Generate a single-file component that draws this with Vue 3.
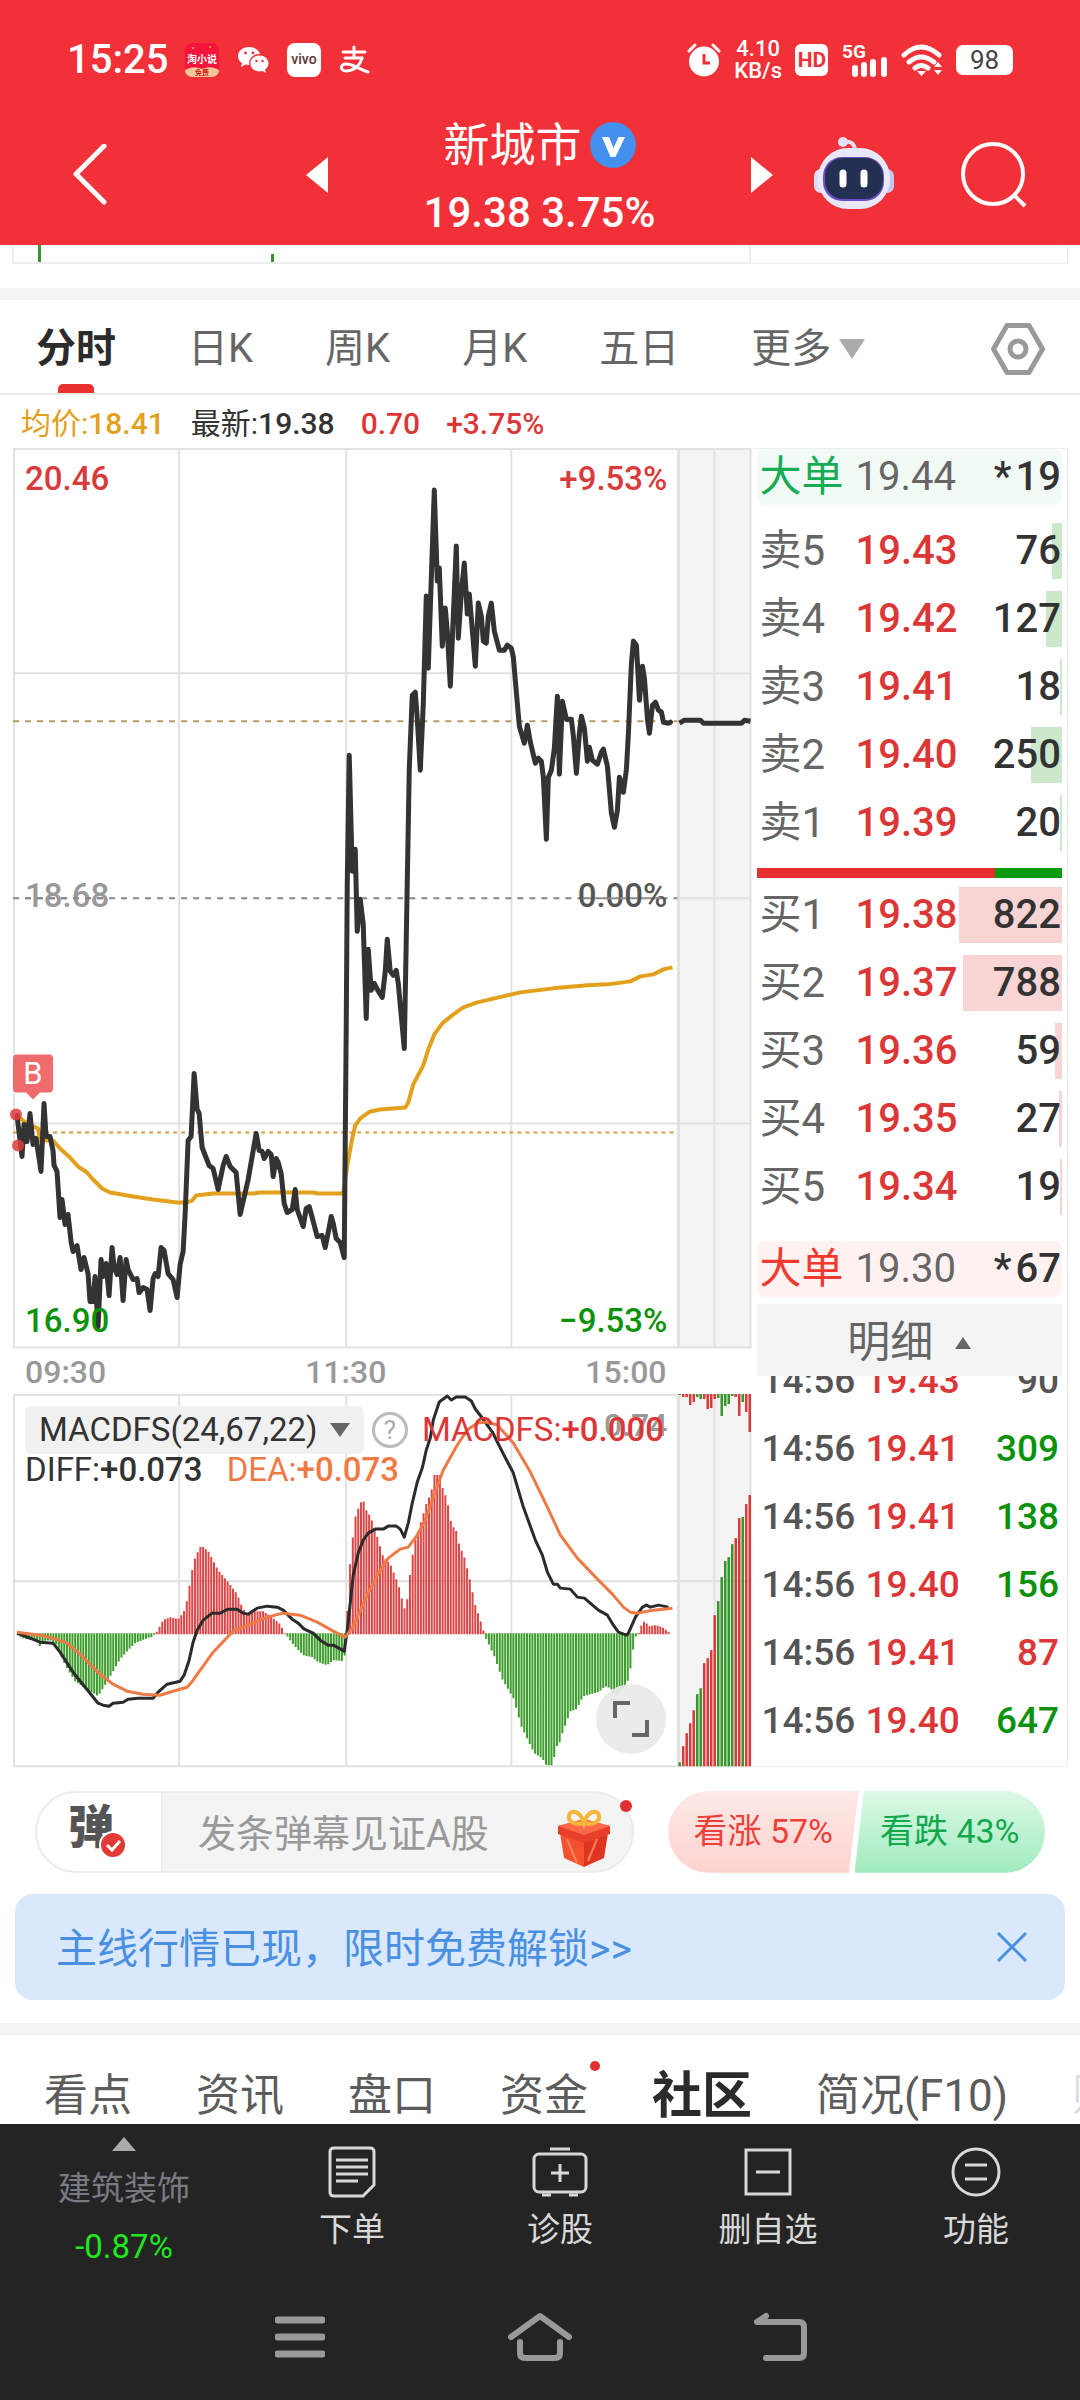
<script setup>
import { computed, ref } from "vue";

const periods = ["分时", "日K", "周K", "月K", "五日"];
const activePeriod = ref("分时");

const indicator = ref("MACDFS(24,67,22)");
const message = ref("");
const showBanner = ref(true);

const sells = [
  { name: "卖5", price: "19.43", vol: 76 },
  { name: "卖4", price: "19.42", vol: 127 },
  { name: "卖3", price: "19.41", vol: 18 },
  { name: "卖2", price: "19.40", vol: 250 },
  { name: "卖1", price: "19.39", vol: 20 },
];

const buys = [
  { name: "买1", price: "19.38", vol: 822 },
  { name: "买2", price: "19.37", vol: 788 },
  { name: "买3", price: "19.36", vol: 59 },
  { name: "买4", price: "19.35", vol: 27 },
  { name: "买5", price: "19.34", vol: 19 },
];

const ticks = [
  { time: "14:56", price: "19.43", vol: 90, type: "flat" },
  { time: "14:56", price: "19.41", vol: 309, type: "down" },
  { time: "14:56", price: "19.41", vol: 138, type: "down" },
  { time: "14:56", price: "19.40", vol: 156, type: "down" },
  { time: "14:56", price: "19.41", vol: 87, type: "up" },
  { time: "14:56", price: "19.40", vol: 647, type: "down" },
];

// 挂单量柱宽
const barWidth = (vol) => Math.max(vol * 0.0411, 0.6) + "%";

const tabs = [
  { name: "看点" },
  { name: "资讯" },
  { name: "盘口" },
  { name: "资金", dot: true },
  { name: "社区", active: true },
  { name: "简况(F10)" },
  { name: "财务", faded: true },
];

// 分时价格线
const priceLine =
  "4,667 9,708 11,676 14,693 17,665 20,696 23,690 28,723 31,655 33,688 37,688 40,702 41,717 44,723 47,769 49,751 52,776 55,766 58,793 60,803 64,797 68,821 71,809 75,825 77,853 80,853 82,828 85,878 88,811 90,828 93,815 96,847 99,799 101,819 104,826 107,809 110,852 113,811 115,821 120,831 124,830 126,844 130,839 134,841 137,862 140,830 142,825 145,828 148,799 151,802 155,825 160,831 164,849 167,816 170,803 172,766 175,692 178,688 181,625 184,661 186,665 189,699 196,717 200,720 205,741 210,717 213,708 217,718 223,724 227,766 235,731 243,685 246,702 249,703 251,710 255,703 258,706 260,728 263,710 265,714 268,725 271,755 274,764 279,761 282,741 284,761 290,778 293,760 296,758 299,769 304,788 309,787 312,799 315,784 318,768 320,775 323,790 327,794 331,809 333,579 334,438 336,307 339,423 342,401 344,483 347,451 350,476 353,570 355,501 358,542 361,535 364,541 369,549 372,523 374,491 377,523 380,527 383,522 385,535 391,600 393,491 396,321 399,247 402,244 404,271 407,322 410,256 413,148 415,220 421,42 424,133 426,120 429,198 432,160 434,183 437,238 440,168 443,98 445,190 448,145 451,115 454,166 456,146 462,218 465,155 468,168 470,193 473,195 475,168 478,155 481,183 486,202 491,202 494,197 498,200 500,209 503,244 506,278 511,295 514,277 517,294 522,315 525,310 528,313 530,329 533,391 535,329 538,322 541,300 544,248 546,326 549,253 553,271 558,271 560,288 563,325 566,285 568,268 571,280 574,313 576,299 579,312 584,316 588,304 590,301 594,318 598,365 601,379 604,362 606,329 610,344 613,321 615,285 618,215 620,193 623,197 626,252 629,218 631,230 634,271 636,285 639,257 642,254 645,262 648,264 650,274 655,275 657,274";

const afterLine =
  "666,275 671,272 687,272 690,275 728,275 731,272 737,273";

// 均价线
const avgLine =
  "4,667 15,676 25,680 27,692 40,692 47,700 57,709 65,718 74,724 79,730 89,740 97,744 120,748 140,751 164,754 174,754 179,752 183,747 200,745 240,745 247,744 300,744 305,745 330,745 334,717 339,690 342,677 347,670 357,663 367,661 392,659 395,654 400,636 410,617 415,601 421,586 429,575 440,566 450,559 464,554 494,547 507,544 540,540 574,537 594,536 617,533 627,528 640,526 650,521 659,519";

const diffLine =
  "4,239 12,242 27,248 40,249 47,258 60,278 77,299 85,309 90,311 96,312 100,309 110,308 115,305 125,304 140,304 145,298 154,290 167,287 171,281 176,266 180,248 184,236 190,226 199,219 207,219 215,215 224,215 230,219 235,220 244,214 254,212 264,213 270,216 279,225 285,229 291,235 300,239 307,246 315,251 320,251 331,257 334,236 337,209 340,181 345,159 350,146 355,139 362,135 370,135 375,132 383,132 387,135 391,143 395,129 399,109 404,88 409,74 413,56 417,44 420,26 426,8 434,2 438,6 443,3 452,3 458,7 462,15 469,24 479,38 487,54 500,79 510,113 522,146 529,161 534,178 540,190 544,190 547,194 557,195 564,203 571,204 585,216 594,221 600,231 605,238 613,241 615,239 622,223 629,213 633,211 637,213 645,211 655,213";

const deaLine =
  "4,238 27,241 40,244 54,249 67,260 87,280 100,290 114,297 130,300 147,301 160,297 174,293 180,286 200,258 220,237 234,231 254,223 270,219 287,221 304,228 320,237 332,243 339,234 345,221 354,201 364,181 375,164 387,155 395,153 404,141 412,126 420,103 430,76 444,51 454,36 464,29 474,28 484,31 500,49 517,78 534,113 547,141 564,164 584,185 599,200 610,213 617,218 624,219 640,216 659,214";

// MACD 柱的关键点 [x, 高度]
const macdShape = [
  [5, -2], [9, -5], [19, -7], [24, -8], [28, -15], [30, -8], [37, -7], [44, -12],
  [47, -21], [54, -35], [62, -48], [72, -55], [85, -63], [90, -55], [99, -40],
  [107, -26], [114, -18], [122, -10], [134, -5], [139, -4], [143, 1], [150, 14],
  [157, 17], [165, 15], [170, 21], [173, 28], [175, 43], [178, 55], [180, 72],
  [184, 80], [186, 87], [190, 87], [195, 83], [205, 64], [215, 52], [224, 40],
  [229, 27], [234, 19], [240, 23], [250, 23], [260, 16], [267, 10], [272, 0],
  [279, -10], [290, -22], [299, -24], [305, -29], [314, -32], [320, -27],
  [331, -28], [333, 0], [336, 62], [339, 90], [341, 114], [347, 131], [350, 134],
  [353, 124], [357, 118], [362, 104], [370, 77], [377, 70], [385, 50], [388, 38],
  [391, 25], [394, 35], [396, 54], [399, 77], [402, 94], [407, 110], [413, 130],
  [418, 142], [421, 159], [427, 159], [429, 147], [432, 139], [435, 128],
  [438, 110], [443, 103], [446, 89], [451, 77], [456, 57], [462, 29], [467, 14],
  [470, 4], [473, -6], [481, -23], [489, -46], [500, -65], [508, -93],
  [516, -110], [521, -120], [529, -125], [533, -132], [539, -132], [541, -123],
  [544, -111], [546, -110], [549, -100], [557, -78], [563, -76], [570, -63],
  [585, -59], [592, -53], [597, -55], [602, -62], [605, -61], [612, -53],
  [615, -46], [618, -30], [620, -14], [623, -1], [626, 2], [628, 9], [631, 13],
  [636, 8], [642, 9], [649, 7], [657, 1],
];

const macdBars = computed(() => {
  const bars = [];
  let k = 0;
  for (let i = 0; i < 240; i++) {
    const x = 5 + i * 2.72;
    while (k < macdShape.length - 2 && macdShape[k + 1][0] < x) k++;
    const [x1, h1] = macdShape[k];
    const [x2, h2] = macdShape[k + 1];
    const t = Math.min((x - x1) / (x2 - x1), 1);
    bars.push({ x, h: h1 + (h2 - h1) * t });
  }
  return bars;
});

const upBars = computed(() =>
  macdBars.value.filter((b) => b.h > 0).map((b) => `M${b.x} 240v${-b.h}`).join("")
);
const downBars = computed(() =>
  macdBars.value.filter((b) => b.h <= 0).map((b) => `M${b.x} 239v${-b.h}`).join("")
);

// 盘后量
const afterHeights = [4, 20, 33, 43, 56, 72, 78, 103, 108, 116, 151, 165, 189, 205, 209, 222, 228, 248, 249, 262, 271];
const afterTops = [1, 3, 3, 11, 8, 3, 5, 5, 15, 14, 5, 4, 22, 12, 10, 2, 3, 22, 8, 18, 38];
const afterColors = "grrrrggrrrrgggggrrgrr";
const colorAt = (i) => (afterColors[i] === "g" ? "#35962a" : "#d93a3a");
</script>

<template>
  <div class="page">
    <header class="top">
      <div class="status">
        <div class="status-side">
          <span class="clock">15:25</span>
          <svg class="s34" viewBox="0 0 34 34">
            <rect width="34" height="34" rx="7" fill="#f5153c" />
            <path d="M0 27q8-5 17-1 9-4 17 1a7 7 0 0 1-7 7H7a7 7 0 0 1-7-7z" fill="#f5c795" />
            <circle cx="8" cy="5" r="1" fill="#ffb14a" />
            <circle cx="25" cy="4" r="1" fill="#ffb14a" />
            <text x="17" y="20" text-anchor="middle" font-size="10" font-weight="700" fill="#fff">淘小说</text>
            <text x="17" y="32" text-anchor="middle" font-size="7" font-weight="700" fill="#c22">免费</text>
          </svg>
          <svg class="s34" viewBox="0 0 34 34">
            <path d="M13 4C6.500 4 2 8 2 13c0 3 1.500 5.500 4 7l-1 4 4.500-2.500 4 .6C12 16 17 10.500 24 11 23 7 18.500 4 13 4z" fill="#fff" />
            <circle cx="9.500" cy="10" r="1.400" fill="#f13037" />
            <circle cx="17" cy="10" r="1.400" fill="#f13037" />
            <path d="M23.500 12.500c-5 0-9 3.500-9 8s4 8 9 8c1 0 2-.2 3-.5l3.500 2-1-3.200c2-1.500 3.500-3.700 3.500-6.300 0-4.500-4-8-9-8z" fill="#fff" />
            <circle cx="20.500" cy="18" r="1.200" fill="#f13037" />
            <circle cx="26.500" cy="18" r="1.200" fill="#f13037" />
          </svg>
          <svg class="s34" viewBox="0 0 34 34">
            <rect width="34" height="34" rx="8" fill="#fff" />
            <text x="17" y="21" text-anchor="middle" font-size="14" font-weight="500" fill="#5c3535">vivo</text>
          </svg>
          <svg class="s34" viewBox="0 0 34 34" fill="none" stroke="#fff" stroke-width="3" stroke-linecap="round">
            <path d="M5 9h22M16 4v11M7 15h17" />
            <path d="M24 15c-2 8-9 13-16 13-6 0-6-7 0-7 7 0 13 5 22 8" />
          </svg>
        </div>
        <div class="status-side right">
          <svg class="s34" viewBox="0 0 34 34">
            <circle cx="17" cy="18.500" r="15" fill="#fff" />
            <path d="M2 8l6-6M32 8l-6-6" stroke="#fff" stroke-width="3" stroke-linecap="round" />
            <path d="M17 11v9h6" fill="none" stroke="#f13037" stroke-width="3" />
          </svg>
          <span class="speed"><span>4.10</span><span>KB/s</span></span>
          <svg class="s34" viewBox="0 0 34 34">
            <rect y="1" width="33" height="32" rx="6" fill="#fff" />
            <text x="17" y="24" text-anchor="middle" font-size="21" font-weight="700" fill="#f13037">HD</text>
          </svg>
          <svg class="signal" viewBox="0 0 46 38">
            <text x="0" y="17" font-size="19" font-weight="700" fill="#fff">5G</text>
            <path d="M13 33v-6M22 33v-9M31 33v-12M42 33V19" stroke="#fff" stroke-width="6" stroke-linecap="round" />
          </svg>
          <svg class="wifi" viewBox="0 0 42 34">
            <path d="M3 12Q20-4 38 12M8 19q12-10 25 0M14 25q6-5 13 0" fill="none" stroke="#fff" stroke-width="5" stroke-linecap="round" />
            <path d="M16 28h9l-4.500 5zM33 24l4-5 4 5zM33 27h8l-4 5z" fill="#fff" />
          </svg>
          <span class="battery">98</span>
        </div>
      </div>

      <div class="titlebar">
        <button class="back" aria-label="返回">
          <svg width="36" height="62" viewBox="0 0 36 62">
            <path d="M32 2L4 30l28 28" fill="none" stroke="#fff" stroke-width="5" stroke-linecap="round" stroke-linejoin="round" />
          </svg>
        </button>
        <div class="switcher">
          <button aria-label="上一只">
            <svg width="22" height="36" viewBox="0 0 22 36"><path d="M22 0v36L0 18z" fill="#fff" /></svg>
          </button>
          <h1 class="stock">
            <span class="name">
              新城市
              <svg width="46" height="46" viewBox="0 0 46 46">
                <circle cx="23" cy="23" r="23" fill="#4490ee" />
                <path d="M12 15h7l4.500 11 5-11H35L25.500 35h-5z" fill="#fff" />
              </svg>
            </span>
            <span class="quote">19.38 3.75%</span>
          </h1>
          <button aria-label="下一只">
            <svg width="22" height="36" viewBox="0 0 22 36"><path d="M0 0v36l22-18z" fill="#fff" /></svg>
          </button>
        </div>
        <button class="robot" aria-label="智能助手">
          <svg width="80" height="76" viewBox="0 0 80 76">
            <path d="M30 5q10-2 11 8" fill="none" stroke="#e6e0f6" stroke-width="4" />
            <circle cx="29" cy="5" r="5" fill="#e6e0f6" />
            <rect y="32" width="14" height="24" rx="7" fill="#dcdff5" />
            <rect x="66" y="32" width="14" height="24" rx="7" fill="#c3c8ee" />
            <rect x="4" y="11" width="72" height="61" rx="30" fill="#e9e8fa" />
            <rect x="9" y="20" width="61" height="44" rx="19" fill="#6a4fc4" />
            <rect x="11" y="21" width="58" height="41" rx="18" fill="#243052" />
            <path d="M29 36v11M50 36v11" stroke="#fff" stroke-width="7" stroke-linecap="round" />
          </svg>
        </button>
        <button aria-label="搜索">
          <svg width="68" height="68" viewBox="0 0 68 68">
            <circle cx="33" cy="33" r="30" fill="none" stroke="#fff" stroke-width="4" />
            <path d="M54 54l11 11" stroke="#fff" stroke-width="4" />
          </svg>
        </button>
      </div>
    </header>

    <div class="strip">
      <div class="strip-left"><i class="tall"></i><i class="short"></i></div>
      <div class="strip-right"></div>
    </div>
    <div class="band"></div>

    <nav class="periods">
      <button
        v-for="p in periods"
        :key="p"
        :class="{ active: p === activePeriod }"
        @click="activePeriod = p"
      >
        {{ p }}
      </button>
      <button class="more">
        更多
        <svg width="26" height="20" viewBox="0 0 26 20"><path d="M0 0h26L13 20z" fill="#aaa" /></svg>
      </button>
      <button class="setting" aria-label="设置">
        <svg width="54" height="52" viewBox="0 0 54 52">
          <path d="M16 2.500h22L51.500 26 38 49.500H16L2.500 26z" fill="none" stroke="#999" stroke-width="5" stroke-linejoin="round" />
          <circle cx="27" cy="26" r="8" fill="none" stroke="#999" stroke-width="5" />
        </svg>
      </button>
    </nav>

    <div class="info">
      <span class="gold">均价:<b>18.41</b></span>
      <span>最新:<b>19.38</b></span>
      <b class="up">0.70</b>
      <b class="up">+3.75%</b>
    </div>

    <main class="board">
      <section class="charts">
        <svg class="chart" viewBox="0 0 738 900">
          <rect x="664" y="1" width="74" height="898" fill="#f4f4f4" />
          <g fill="none" stroke="#e2e2e2" stroke-width="2">
            <path d="M1 1h736v898H1zM166 1v898M333 1v898M498 1v898M701 1v898M1 225h736M664 450h73M1 675h736" />
            <path d="M665 1v898" stroke-width="3" />
          </g>
          <path d="M0 273h664" stroke="#b89a62" stroke-width="2" stroke-dasharray="6 6" />
          <path d="M0 450h664" stroke="#888" stroke-width="2" stroke-dasharray="6 6" />
          <path d="M0 684h664" stroke="#d99a3c" stroke-width="2" stroke-dasharray="4 4" />
          <polyline :points="avgLine" fill="none" stroke="#e2a01c" stroke-width="4" stroke-linejoin="round" />
          <polyline :points="priceLine" fill="none" stroke="#333" stroke-width="5" stroke-linejoin="round" stroke-linecap="round" />
          <polyline :points="afterLine" fill="none" stroke="#333" stroke-width="5" stroke-linejoin="round" />
          <g font-size="33" font-weight="500">
            <text x="12" y="42" fill="#d93a3a">20.46</text>
            <text x="12" y="459" fill="#999">18.68</text>
            <text x="12" y="883" fill="#0b920b">16.90</text>
            <g text-anchor="end">
              <text x="654" y="42" fill="#d93a3a">+9.53%</text>
              <text x="654" y="459" fill="#555">0.00%</text>
              <text x="654" y="883" fill="#0b920b">−9.53%</text>
            </g>
          </g>
          <path d="M12 450h78M570 450h84" stroke="#888" stroke-width="2" stroke-dasharray="6 6" />
          <path d="M4 606h32a4 4 0 0 1 4 4v30a4 4 0 0 1-4 4h-9l-7 7-7-7H4a4 4 0 0 1-4-4v-30a4 4 0 0 1 4-4z" fill="#f06c6c" />
          <text x="20" y="636" text-anchor="middle" font-size="31" fill="#fff">B</text>
          <g fill="#e03c3c" fill-opacity=".85">
            <circle cx="3" cy="666" r="6" />
            <circle cx="5" cy="697" r="6" />
          </g>
        </svg>

        <div class="axis">
          <span>09:30</span>
          <span>11:30</span>
          <span>15:00</span>
        </div>

        <div class="macd">
          <svg class="chart" viewBox="0 0 738 373">
            <rect x="664" y="1" width="74" height="371" fill="#f4f4f4" />
            <g fill="none" stroke="#e2e2e2" stroke-width="2">
              <path d="M1 1h736v371H1zM166 1v371M333 1v371M498 1v371M701 1v371M1 187h736" />
              <path d="M665 1v371" stroke-width="3" />
            </g>
            <path :d="upBars" stroke="#dc4646" stroke-width="2" />
            <path :d="downBars" stroke="#3d9c2c" stroke-width="2" />
            <g v-for="(h, i) in afterHeights" :key="i" :fill="colorAt(i)">
              <rect :x="665 + i * 3.5" :y="372 - h" width="2.500" :height="h" />
              <rect :x="665 + i * 3.5" y="0" width="2.500" :height="afterTops[i]" />
            </g>
            <text x="654" y="42" text-anchor="end" font-size="32" font-weight="500" fill="#999">0.74</text>
            <polyline :points="diffLine" fill="none" stroke="#2b2b2b" stroke-width="3" stroke-linejoin="round" />
            <polyline :points="deaLine" fill="none" stroke="#ef7a45" stroke-width="3" stroke-linejoin="round" />
          </svg>
          <div class="legend">
            <div class="legend-row">
              <label class="picker">
                <select v-model="indicator" aria-label="指标">
                  <option>MACDFS(24,67,22)</option>
                </select>
                <svg width="20" height="14" viewBox="0 0 20 14"><path d="M0 0h20L10 14z" fill="#666" /></svg>
              </label>
              <button class="help" aria-label="说明">?</button>
              <span class="up">MACDFS:<b>+0.000</b></span>
            </div>
            <div class="legend-row second">
              <span>DIFF:<b>+0.073</b></span>
              <span class="orange">DEA:<b>+0.073</b></span>
            </div>
          </div>
          <button class="expand" aria-label="全屏">
            <svg width="36" height="36" viewBox="0 0 36 36">
              <path d="M2 17V2h15M34 19v15H19" fill="none" stroke="#666" stroke-width="4" />
            </svg>
          </button>
        </div>
      </section>

      <section class="orders">
        <div class="big sell"><span>大单</span><b>19.44</b><strong><i>*</i>19</strong></div>
        <table class="book sells">
          <tbody>
            <tr v-for="r in sells" :key="r.name">
              <th scope="row">{{ r.name }}</th>
              <td class="up">{{ r.price }}</td>
              <td class="vol"><i :style="{ width: barWidth(r.vol) }"></i><span>{{ r.vol }}</span></td>
            </tr>
          </tbody>
        </table>
        <div class="ratio"></div>
        <table class="book buys">
          <tbody>
            <tr v-for="r in buys" :key="r.name">
              <th scope="row">{{ r.name }}</th>
              <td class="up">{{ r.price }}</td>
              <td class="vol"><i :style="{ width: barWidth(r.vol) }"></i><span>{{ r.vol }}</span></td>
            </tr>
          </tbody>
        </table>
        <div class="big buy"><span>大单</span><b>19.30</b><strong><i>*</i>67</strong></div>
        <button class="detail">
          明细
          <svg width="16" height="12" viewBox="0 0 16 12"><path d="M0 12L8 0l8 12z" fill="#666" /></svg>
        </button>
        <div class="tick-box">
          <table class="ticks">
            <tbody>
              <tr v-for="(t, i) in ticks" :key="i">
                <td>{{ t.time }}</td>
                <td class="up">{{ t.price }}</td>
                <td :class="t.type">{{ t.vol }}</td>
              </tr>
            </tbody>
          </table>
        </div>
      </section>
    </main>

    <div class="social">
      <div class="danmu">
        <button class="danmu-switch" aria-label="弹幕开关">
          <span>弹</span>
          <svg width="28" height="28" viewBox="0 0 28 28">
            <circle cx="14" cy="14" r="13" fill="#e23a35" stroke="#fff" stroke-width="2" />
            <path d="M8 14l5 5 8-9" fill="none" stroke="#fff" stroke-width="3" />
          </svg>
        </button>
        <input v-model="message" type="text" placeholder="发条弹幕见证A股" aria-label="弹幕" />
        <button class="gift" aria-label="礼物">
          <svg width="54" height="58" viewBox="0 0 54 58">
            <path d="M3 24l24 9v25L7 49z" fill="#f4512f" />
            <path d="M51 24l-24 9v25l20-9z" fill="#de3522" />
            <path d="M1 17l26-7 26 7v8L27 34 1 25z" fill="#e8402a" />
            <path d="M1 17l26-7 26 7-26 9z" fill="#ff6a4a" />
            <path d="M10 30l10 24M40 30L31 52" stroke="#ff8158" stroke-width="2" />
            <path d="M27 14C20 16 11 14 12 7s11-6 15 7c4-13 14-14 15-7s-8 9-15 7z" fill="none" stroke="#f5b63c" stroke-width="4" />
          </svg>
        </button>
        <i class="dot"></i>
      </div>
      <div class="vote">
        <button class="bull">看涨 57%</button>
        <button class="bear">看跌 43%</button>
      </div>
    </div>

    <div v-if="showBanner" class="banner">
      <a href="#">主线行情已现，限时免费解锁&gt;&gt;</a>
      <button aria-label="关闭" @click="showBanner = false">
        <svg width="32" height="32" viewBox="0 0 32 32">
          <path d="M2 2l28 28M30 2L2 30" stroke="#4a90e2" stroke-width="3" />
        </svg>
      </button>
    </div>

    <div class="band"></div>
    <nav class="tabs">
      <button v-for="t in tabs" :key="t.name" :class="{ active: t.active, faded: t.faded }">
        {{ t.name }}<i v-if="t.dot" class="dot"></i>
      </button>
    </nav>

    <footer class="bottom">
      <div class="actions">
        <button class="sector">
          <svg width="24" height="14" viewBox="0 0 24 14"><path d="M0 14L12 0l12 14z" fill="#aaa" /></svg>
          <span>建筑装饰</span>
          <em>-0.87%</em>
        </button>
        <button>
          <svg width="48" height="52" viewBox="0 0 48 52">
            <path d="M6 2h36q4 0 4 4v33L35 50H6q-4 0-4-4V6q0-4 4-4z" />
            <path d="M8 14h32M8 21h32M8 28h32M8 35h22" />
          </svg>
          下单
        </button>
        <button>
          <svg width="56" height="52" viewBox="0 0 56 52">
            <rect x="2" y="8" width="52" height="38" rx="5" />
            <path d="M18 3h20M10 49h9M37 49h9M28 18v18M19 27h18" />
          </svg>
          诊股
        </button>
        <button>
          <svg width="48" height="52" viewBox="0 0 48 52">
            <rect x="2" y="4" width="44" height="44" />
            <path d="M12 26h24" />
          </svg>
          删自选
        </button>
        <button>
          <svg width="50" height="52" viewBox="0 0 50 52">
            <circle cx="25" cy="26" r="23" />
            <path d="M14 19h22M14 33h22" />
          </svg>
          功能
        </button>
      </div>
      <div class="sysnav">
        <button aria-label="菜单">
          <svg width="50" height="42" viewBox="0 0 50 42">
            <path d="M3 4h44M3 21h44M3 38h44" stroke-width="7" />
          </svg>
        </button>
        <button aria-label="主页">
          <svg width="64" height="50" viewBox="0 0 64 50">
            <path d="M3 25L32 4l29 21M12 30v11q0 5 5 5h30q5 0 5-5V30" stroke-width="6" />
          </svg>
        </button>
        <button aria-label="后退">
          <svg width="54" height="50" viewBox="0 0 54 50">
            <path d="M13 4L4 10h42q5 0 5 5v26q0 5-5 5H13" stroke-width="6" />
          </svg>
        </button>
      </div>
    </footer>
  </div>
</template>

<style>
body {
  background: #fff;
}
</style>

<style scoped>
.page {
  min-height: 100vh;
  display: flex;
  flex-direction: column;
  font-family: Roboto, "Noto Sans CJK SC", sans-serif;
  line-height: 1.2;
  color: #333;
  overflow: hidden;
}

.page * {
  box-sizing: border-box;
}

button {
  border: 0;
  padding: 0;
  background: none;
  font: inherit;
  color: inherit;
}

svg {
  display: block;
  flex: none;
}

b,
strong {
  font-weight: 500;
}

i,
em {
  font-style: normal;
}

.up {
  color: #dc3636;
}

.down {
  color: #0b920b;
}

.top {
  background: #f13037;
  color: #fff;
}

.status {
  height: 90px;
  padding: 30px 67px 0;
  display: flex;
  align-items: center;
  justify-content: space-between;
}

.status-side {
  display: flex;
  align-items: center;
  gap: 17px;
}

.right {
  gap: 13px;
}

.clock {
  font-size: 40px;
  font-weight: 500;
}

.s34 {
  width: 34px;
  height: 34px;
}

.speed {
  display: flex;
  flex-direction: column;
  align-items: center;
  font-size: 22px;
  line-height: 22px;
  font-weight: 500;
}

.signal {
  width: 46px;
  height: 38px;
}

.wifi {
  width: 42px;
  height: 34px;
}

.battery {
  width: 57px;
  height: 30px;
  border-radius: 7px;
  background: #fff;
  color: #444;
  font-size: 26px;
  line-height: 30px;
  text-align: center;
}

.titlebar {
  height: 155px;
  padding: 14px 52px 0 72px;
  display: flex;
  align-items: center;
}

.back {
  width: 234px;
}

.switcher {
  flex: 1;
  display: flex;
  align-items: center;
  justify-content: space-between;
}

.stock {
  margin: 0;
  padding-top: 8px;
  font-weight: 400;
  display: flex;
  flex-direction: column;
  align-items: center;
}

.name {
  display: flex;
  align-items: center;
  gap: 8px;
  font-size: 46px;
  line-height: 68px;
}

.quote {
  font-size: 42px;
  line-height: 68px;
  font-weight: 500;
}

.robot {
  margin: 0 66px 0 41px;
}

.strip {
  height: 43px;
  padding: 0 12px 24px;
  display: grid;
  grid-template-columns: 7fr 3fr;
}

.strip-left {
  border: 2px solid #eee;
  border-top: 0;
  display: flex;
  align-items: flex-end;
}

.strip-right {
  border: 1px solid #eee;
  border-width: 0 1px 1px 0;
}

.strip i {
  width: 3px;
  background: #35962a;
}

.tall {
  height: 100%;
  margin-left: 24px;
}

.short {
  height: 8px;
  margin-left: 230px;
}

.band {
  height: 12px;
  background: #f4f4f4;
}

.periods {
  height: 95px;
  padding: 0 35px 0 36px;
  border-bottom: 2px solid #eaeaea;
  display: flex;
  gap: 72px;
  font-size: 40px;
  color: #666;
}

.periods button {
  position: relative;
  padding-top: 5px;
}

.periods .active {
  color: #2b2b2b;
  font-weight: 700;
}

.periods .active::after {
  content: "";
  position: absolute;
  left: 22px;
  right: 22px;
  bottom: 0;
  height: 9px;
  border-radius: 5px 5px 0 0;
  background: #e93030;
}

.more {
  display: flex;
  align-items: center;
  gap: 8px;
}

.setting {
  margin-left: auto;
}

.info {
  height: 53px;
  padding: 4px 21px 0;
  display: flex;
  align-items: center;
  gap: 26px;
  font-size: 30px;
}

.gold {
  color: #e2a01c;
}

.board {
  padding: 0 12px 0 13px;
  display: grid;
  grid-template-columns: 7fr 3fr;
}

.chart {
  width: 100%;
  height: auto;
  overflow: visible;
}

.axis {
  height: 45px;
  padding: 3px 85px 0 12px;
  display: flex;
  align-items: center;
  justify-content: space-between;
  font-size: 32px;
  font-weight: 500;
  color: #999;
}

.macd {
  position: relative;
}

.legend {
  position: absolute;
  left: 12px;
  top: 12px;
  font-size: 33px;
}

.legend-row {
  display: flex;
  align-items: center;
  line-height: 48px;
}

.second {
  gap: 24px;
  line-height: 32px;
}

.picker {
  height: 48px;
  padding: 0 14px;
  border-radius: 6px;
  background: #f1f1f1;
  display: flex;
  align-items: center;
  gap: 12px;
}

.picker select {
  appearance: none;
  border: 0;
  padding: 0;
  background: none;
  font: inherit;
  color: inherit;
}

.help {
  width: 36px;
  height: 36px;
  margin: 0 14px 0 8px;
  border: 3px solid #bbb;
  border-radius: 50%;
  font-size: 26px;
  line-height: 30px;
  color: #aaa;
}

.orange {
  color: #ef7a45;
}

.expand {
  position: absolute;
  right: 86px;
  bottom: 13px;
  width: 70px;
  height: 70px;
  border-radius: 50%;
  background: rgba(233, 233, 233, 0.92);
  display: flex;
  align-items: center;
  justify-content: center;
}

.orders {
  padding: 0 5px;
  border: 1px solid #eee;
  border-left: 0;
  display: flex;
  flex-direction: column;
}

.big {
  height: 56px;
  padding: 0 1px 0 3px;
  border-radius: 8px;
  display: grid;
  grid-template-columns: 96px 1fr auto;
  align-items: center;
  font-size: 40px;
}

.big span {
  font-size: 42px;
}

.big b {
  color: #666;
  font-weight: 400;
}

.big i {
  margin-right: 4px;
}

.sell {
  background: #f1faf5;
}

.sell span {
  color: #15ac55;
}

.buy {
  background: #fff2f1;
}

.buy span {
  color: #f03a30;
}

.book {
  display: block;
}

.book tbody {
  display: grid;
  gap: 12px;
}

.book tr {
  position: relative;
  height: 56px;
  padding: 0 1px 0 3px;
  display: grid;
  grid-template-columns: 96px 1fr auto;
  align-items: center;
  font-size: 40px;
  font-weight: 500;
}

.book th {
  padding: 0;
  font-size: 42px;
  font-weight: 400;
  text-align: left;
  color: #666;
}

.book td {
  padding: 0;
}

.vol i {
  position: absolute;
  top: 0;
  right: 0;
  height: 100%;
}

.vol span {
  position: relative;
}

.sells {
  margin: 18px 0 17px;
}

.sells i {
  background: #cbe8cb;
}

.buys {
  margin: 9px 0 26px;
}

.buys i {
  background: #f9d4d4;
}

.ratio {
  height: 10px;
  background: linear-gradient(to right, #e62e2e 78%, #0b9a0b 78%);
}

.detail {
  height: 72px;
  margin-top: 7px;
  padding-top: 5px;
  background: #f4f4f4;
  display: flex;
  align-items: center;
  justify-content: center;
  gap: 22px;
  font-size: 43px;
  color: #666;
}

/* 列表滚动到一半，首行被遮住 */
.tick-box {
  flex: 1 1 0px;
  min-height: 0;
  overflow: hidden;
  display: flex;
  flex-direction: column;
  justify-content: flex-end;
}

.ticks {
  display: block;
}

.ticks tr {
  height: 68px;
  padding: 0 3px 0 5px;
  display: grid;
  grid-template-columns: 104px 1fr auto;
  align-items: center;
  font-size: 37px;
  font-weight: 500;
}

.ticks tbody {
  display: block;
  padding-bottom: 11px;
}

.ticks td {
  padding: 0;
}

.ticks td:first-child,
.flat {
  color: #555;
}

.social {
  padding: 24px 35px 21px;
  display: flex;
  gap: 34px;
}

.danmu {
  position: relative;
  flex: 1;
  min-width: 0;
  height: 82px;
  border: 2px solid #ececec;
  border-radius: 41px;
  background: #f4f4f4;
  display: flex;
  align-items: center;
}

.danmu-switch {
  position: relative;
  flex: none;
  width: 126px;
  height: 100%;
  border-right: 2px solid #ececec;
  border-radius: 39px 0 0 39px;
  background: #fff;
  font-size: 46px;
  font-weight: 900;
  color: #555;
}

.danmu-switch span {
  display: block;
  padding: 0 16px 8px 0;
}

.danmu-switch svg {
  position: absolute;
  right: 34px;
  bottom: 12px;
}

.danmu input {
  flex: 1;
  width: 0;
  min-width: 0;
  border: 0;
  padding: 6px 0 0 35px;
  background: none;
  outline: none;
  font: inherit;
  font-size: 38px;
}

.danmu input::placeholder {
  color: #999;
  opacity: 1;
}

.gift {
  margin: 12px 21px 0 0;
}

.dot {
  position: absolute;
  right: 0;
  top: 7px;
  width: 12px;
  height: 12px;
  border-radius: 50%;
  background: #e23030;
}

.vote {
  flex: none;
  width: 377px;
  display: flex;
  border-radius: 41px;
  overflow: hidden;
  font-size: 34px;
}

.vote button {
  flex: 1;
  white-space: nowrap;
}

.bull {
  margin-right: -4px;
  background: linear-gradient(#fdeae8, #fdd3cf);
  clip-path: polygon(0 0, 100% 0, 95% 100%, 0 100%);
  color: #ee4038;
}

.bear {
  background: linear-gradient(#dcf9e6, #a0ebbd);
  clip-path: polygon(5% 0, 100% 0, 100% 100%, 0 100%);
  color: #12a84e;
}

.banner {
  height: 106px;
  margin: 0 15px 23px;
  padding: 0 37px 0 41px;
  border-radius: 18px;
  background: #d9e8fb;
  display: flex;
  align-items: center;
  justify-content: space-between;
}

.banner a {
  padding-top: 6px;
  font-size: 41px;
  text-decoration: none;
  color: #4a90e2;
}

.tabs {
  height: 89px;
  padding: 31px 0 0 44px;
  display: flex;
  align-items: flex-start;
  gap: 64px;
  font-size: 44px;
  line-height: 60px;
  color: #5c5c5c;
  white-space: nowrap;
  overflow: hidden;
}

.tabs button {
  position: relative;
  flex: none;
}

.tabs .active {
  font-size: 50px;
  font-weight: 700;
  color: #2b2b2b;
}

.tabs .faded {
  color: #ddd;
}

.tabs .dot {
  right: -12px;
  top: -5px;
  width: 10px;
  height: 10px;
}

.bottom {
  flex: 1;
  background: #242424;
}

.actions {
  height: 150px;
  display: grid;
  grid-template-columns: 248px repeat(4, 1fr);
  font-size: 33px;
  color: #d8d8d8;
}

.actions button {
  padding-top: 22px;
  display: flex;
  flex-direction: column;
  align-items: center;
  line-height: 48px;
  gap: 8px;
}

.actions svg {
  fill: none;
  stroke: #d8d8d8;
  stroke-width: 3;
}

.actions .sector {
  padding-top: 13px;
  gap: 14px;
}

.sector svg {
  stroke: none;
}

.sector span {
  color: #7a7a82;
}

.sector em {
  line-height: 40px;
  color: #20e820;
}

.sysnav {
  height: 126px;
  padding: 0 180px;
  display: grid;
  grid-template-columns: repeat(3, 1fr);
}

.sysnav svg {
  margin: 0 auto;
  fill: none;
  stroke: #999;
  stroke-linecap: round;
  stroke-linejoin: round;
}
</style>
